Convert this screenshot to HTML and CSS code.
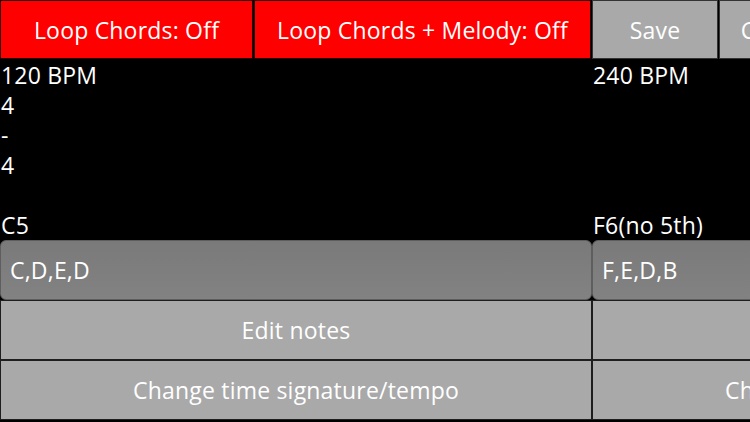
FILE: index.html
```html
<!DOCTYPE html>
<html>
<head>
<meta charset="utf-8">
<link rel="stylesheet" href="styles.css">
</head>
<body>
<div class="app">
  <div class="toolbar">
    <div class="tb-btn red w-loop">Loop Chords: Off</div>
    <div class="tb-btn red w-melody">Loop Chords + Melody: Off</div>
    <div class="tb-btn grey w-save">Save</div>
    <div class="tb-btn grey w-clear">Clear</div>
  </div>
  <div class="bars">
    <div class="bar">
      <div class="line">120 BPM</div>
      <div class="line">4</div>
      <div class="line">-</div>
      <div class="line">4</div>
      <div class="line"></div>
      <div class="line">C5</div>
      <div class="notes">C,D,E,D</div>
      <div class="action">Edit notes</div>
      <div class="action">Change time signature/tempo</div>
    </div>
    <div class="bar">
      <div class="line">240 BPM</div>
      <div class="line"></div>
      <div class="line"></div>
      <div class="line"></div>
      <div class="line"></div>
      <div class="line">F6(no 5th)</div>
      <div class="notes">F,E,D,B</div>
      <div class="action">Edit notes</div>
      <div class="action">Change time signature/tempo</div>
    </div>
  </div>
</div>
</body>
</html>
```
FILE: styles.css
```css
html, body {
  margin: 0;
  padding: 0;
  background: #000;
}
body {
  width: 750px;
  height: 422px;
  overflow: hidden;
  font-family: "Open Sans", "Noto Sans", sans-serif;
  font-size: 23px;
  letter-spacing: 0.2px;
  color: #fff;
}
.app {
  width: 750px;
  height: 422px;
  overflow: hidden;
}
.toolbar {
  display: flex;
  gap: 1px;
  height: 60px;
  align-items: flex-start;
}
.tb-btn {
  flex: none;
  box-sizing: border-box;
  height: 59px;
  border: 1px solid #2a0000;
  display: flex;
  align-items: center;
  justify-content: center;
  white-space: nowrap;
  color: #fff;
}
.red { background: #ff0000; }
.grey { background: #a9a9a9; border-color: #333; }
.w-loop { width: 253px; }
.w-melody { width: 337px; }
.w-save { width: 126px; }
.w-clear { width: 100px; }
.bars {
  display: flex;
}
.bar {
  flex: none;
  width: 592px;
  display: flex;
  flex-direction: column;
}
.line {
  height: 30px;
  line-height: 30px;
  padding-left: 1px;
  white-space: nowrap;
}
.notes {
  box-sizing: border-box;
  height: 60px;
  border: 1px solid #5e5e5e;
  border-radius: 6px;
  background: linear-gradient(#7a7a7a, #828282);
  display: flex;
  align-items: center;
  padding-left: 9px;
}
.action {
  box-sizing: border-box;
  height: 60px;
  border: 1px solid #1e1e1e;
  background: #a9a9a9;
  display: flex;
  align-items: center;
  justify-content: center;
  white-space: nowrap;
}
```
